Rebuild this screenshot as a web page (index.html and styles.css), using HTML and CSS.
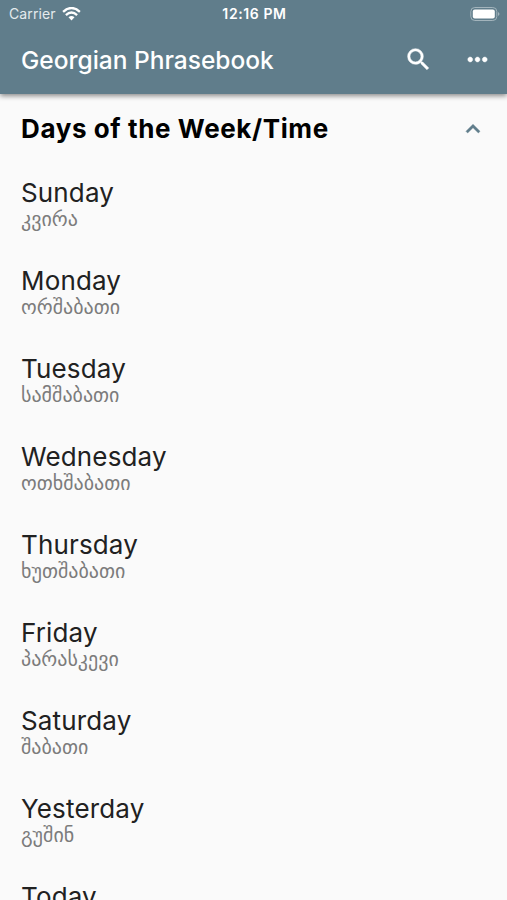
FILE: index.html
```html
<!DOCTYPE html>
<html lang="en">
<head>
  <meta charset="UTF-8" />
  <meta name="viewport" content="width=device-width, initial-scale=1.0"/>
  <title>Georgian Phrasebook</title>
  <link rel="stylesheet" href="styles.css">
</head>
<body>

  <header class="header">
    <!-- Status bar -->
    <div class="status-bar">
      <div class="carrier">
        <span>Carrier</span>
        <svg class="wifi" viewBox="0 0 20 15">
          <path d="M1 5.2 Q10 -3 19 5.2" />
          <path d="M4 8.6 Q10 3.2 16 8.6" />
          <path class="wifi-dot" d="M6.8 11 Q10 8.3 13.2 11 L10 14.5 Z" />
        </svg>
      </div>
      <div class="clock">12:16 PM</div>
      <svg class="battery" viewBox="0 0 30 14">
        <rect class="battery-case" x="0.8" y="0.5" width="26" height="13" rx="4" />
        <rect class="battery-level" x="2.8" y="2.5" width="22" height="9" rx="2" />
        <path class="battery-tip" d="M28 5 Q31 7 28 9 Z" />
      </svg>
    </div>

    <!-- App bar -->
    <nav class="navbar">
      <h1 class="navbar-title">Georgian Phrasebook</h1>
      <svg class="icon-search" viewBox="0 0 24 24">
        <path d="M15.5 14h-.79l-.28-.27A6.47 6.47 0 0 0 16 9.5 6.5 6.5 0 1 0 9.5 16c1.61 0 3.09-.59 4.23-1.57l.27.28v.79l5 4.99L20.49 19l-4.99-5zm-6 0C7.01 14 5 11.99 5 9.5S7.01 5 9.5 5 14 7.01 14 9.5 11.99 14 9.5 14z" />
      </svg>
      <svg class="icon-more" viewBox="0 0 24 24">
        <path d="M6 10c-1.1 0-2 .9-2 2s.9 2 2 2 2-.9 2-2-.9-2-2-2zm12 0c-1.1 0-2 .9-2 2s.9 2 2 2 2-.9 2-2-.9-2-2-2zm-6 0c-1.1 0-2 .9-2 2s.9 2 2 2 2-.9 2-2-.9-2-2-2z" />
      </svg>
    </nav>
  </header>

  <main class="content">
    <div class="section-header">
      <h2 class="section-title">Days of the Week/Time</h2>
      <svg class="icon-collapse" viewBox="0 0 24 24">
        <path d="M12 8l-6 6 1.41 1.41L12 10.83l4.59 4.58L18 14z" />
      </svg>
    </div>

    <ul class="phrases">
      <li class="phrase">
        <div class="english">Sunday</div>
        <div class="georgian" lang="ka">კვირა</div>
      </li>
      <li class="phrase">
        <div class="english">Monday</div>
        <div class="georgian" lang="ka">ორშაბათი</div>
      </li>
      <li class="phrase">
        <div class="english">Tuesday</div>
        <div class="georgian" lang="ka">სამშაბათი</div>
      </li>
      <li class="phrase">
        <div class="english">Wednesday</div>
        <div class="georgian" lang="ka">ოთხშაბათი</div>
      </li>
      <li class="phrase">
        <div class="english">Thursday</div>
        <div class="georgian" lang="ka">ხუთშაბათი</div>
      </li>
      <li class="phrase">
        <div class="english">Friday</div>
        <div class="georgian" lang="ka">პარასკევი</div>
      </li>
      <li class="phrase">
        <div class="english">Saturday</div>
        <div class="georgian" lang="ka">შაბათი</div>
      </li>
      <li class="phrase">
        <div class="english">Yesterday</div>
        <div class="georgian" lang="ka">გუშინ</div>
      </li>
      <li class="phrase">
        <div class="english">Today</div>
      </li>
    </ul>
  </main>

</body>
</html>
```
FILE: styles.css
```css
body {
  margin: 0;
  height: 900px;
  display: flex;
  flex-direction: column;
  overflow: hidden;
  background: #fafafa;
  font-family: Inter, "DejaVu Sans", sans-serif;
}

.header {
  flex: none;
  height: 94px;
  background-color: #607d8b;
  color: #fff;
  box-shadow: 0 2px 5px rgba(0, 0, 0, 0.45);
}

.status-bar {
  height: 27px;
  display: grid;
  grid-template-columns: 1fr auto 1fr;
  align-items: center;
  padding: 0 7px 0 9px;
  font-size: 14px;
}

.carrier {
  display: flex;
  align-items: center;
  gap: 6px;
  color: #e4eaed;
  letter-spacing: 0.1px;
}

.wifi {
  width: 19px;
  height: 14px;
  fill: none;
  stroke: #fff;
  stroke-width: 2.5;
}

.wifi .wifi-dot {
  fill: #fff;
  stroke: none;
}

.clock {
  font-weight: 600;
  letter-spacing: 0.6px;
}

.battery {
  width: 30px;
  height: 14px;
  justify-self: end;
}

.battery-case {
  fill: none;
  stroke: #a3b4bc;
}

.battery-level {
  fill: #fff;
}

.battery-tip {
  fill: #a3b4bc;
}

.navbar {
  height: 65px;
  display: flex;
  align-items: center;
  padding: 0 15px 0 21px;
}

.navbar-title {
  flex: 1;
  margin: 0;
  font-size: 24.5px;
  font-weight: 500;
}

.navbar svg {
  width: 29px;
  height: 29px;
  fill: #fff;
  stroke: #fff;
  stroke-width: 0.4;
}

.navbar .icon-search {
  margin-right: 30px;
}

.content {
  flex: 1;
  min-height: 0;
  overflow: hidden;
  padding: 0 20px 0 21px;
}

.section-header {
  height: 69px;
  display: flex;
  align-items: center;
  justify-content: space-between;
}

.section-title {
  margin: 0;
  font-size: 26px;
  font-weight: 700;
  letter-spacing: 0.6px;
  color: #000;
}

.icon-collapse {
  width: 28px;
  height: 28px;
  fill: #607d8b;
  stroke: #607d8b;
  stroke-width: 0.4;
}

.phrases {
  margin: 0;
  padding: 0;
  list-style: none;
}

.phrase {
  height: 88px;
  box-sizing: border-box;
  padding-top: 13px;
}

.english {
  font-size: 26px;
  line-height: 34px;
  letter-spacing: 0.15px;
  color: #212121;
}

.georgian {
  font-size: 20px;
  line-height: 18px;
  color: #7c7c7c;
}
```
